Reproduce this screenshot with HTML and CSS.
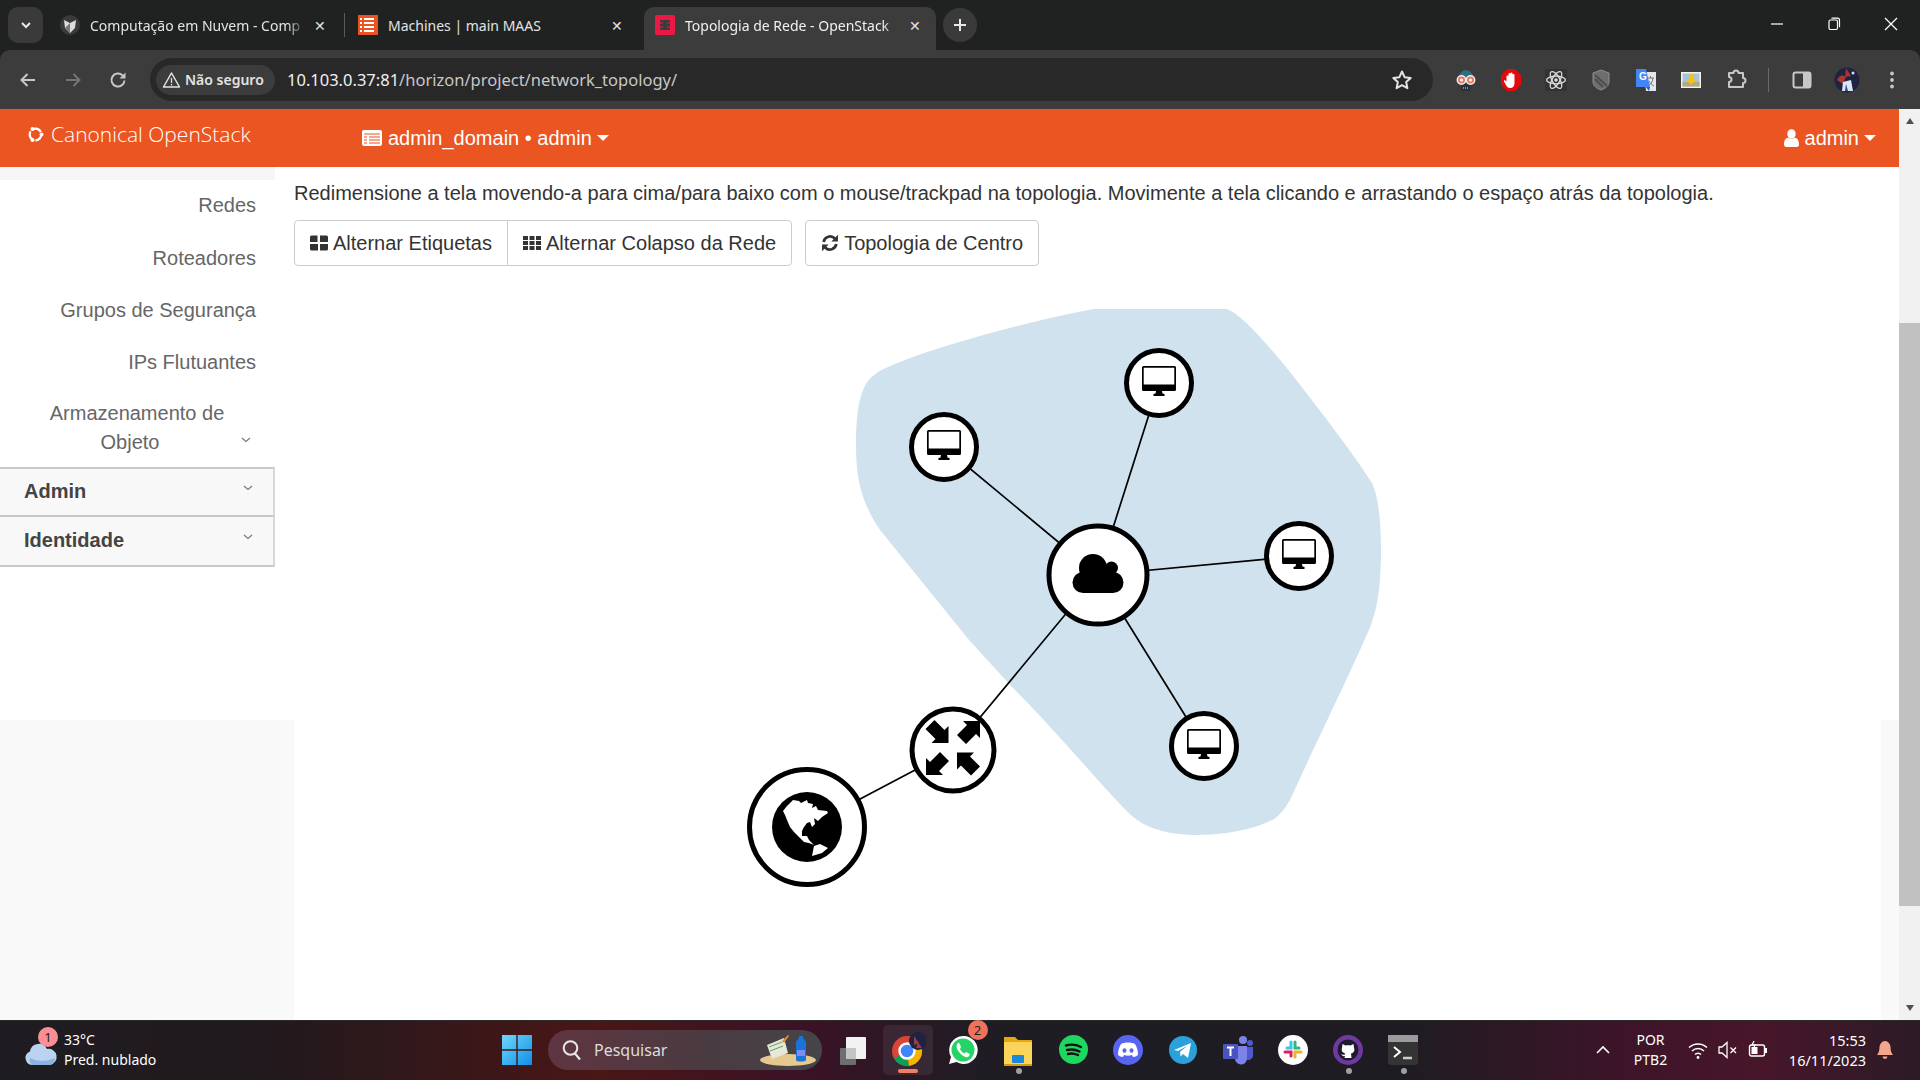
FILE: index.html
```html
<!DOCTYPE html>
<html lang="pt-BR">
<head>
<meta charset="utf-8">
<title>Topologia de Rede - OpenStack</title>
<link rel="stylesheet" href="styles.css">
</head>
<body>
<header class="tabstrip">
  <div class="tab-menu"><svg width="12" height="8" viewBox="0 0 12 8"><path d="M2 2l4 4 4-4" fill="none" stroke="#e8e8e8" stroke-width="2"/></svg></div>
  <div class="tab tab-first">
    <svg class="favicon" viewBox="0 0 20 20"><circle cx="10" cy="10" r="10" fill="#3a3a3a"/><path d="M4 5l6 3 6-3-1 8-5 5-5-5z" fill="#ddd"/><path d="M10 8v10l-5-5z" fill="#777"/></svg>
    <span class="tab-title">Computação em Nuvem - Comp</span>
    <span class="tab-close">✕</span>
  </div>
  <div class="tab-sep"></div>
  <div class="tab tab-second">
    <svg class="favicon" viewBox="0 0 20 20"><rect width="20" height="20" fill="#e95420"/><path d="M6 4h10M6 8h10M6 12h10M6 16h10" stroke="#fff" stroke-width="2"/><path d="M2 4h2M2 8h2M2 12h2M2 16h2" stroke="#fff" stroke-width="2"/></svg>
    <span class="tab-title">Machines | main MAAS</span>
    <span class="tab-close">✕</span>
  </div>
  <div class="tab tab-active">
    <svg class="favicon" viewBox="0 0 20 20"><rect width="20" height="20" rx="2" fill="#ed1944"/><rect x="5" y="5" width="10" height="10" fill="#3c3c3c"/><path d="M2 8h6M2 12h6M12 8h6M12 12h6" stroke="#ed1944" stroke-width="1"/></svg>
    <span class="tab-title">Topologia de Rede - OpenStack</span>
    <span class="tab-close">✕</span>
  </div>
  <div class="tab-new"><svg width="14" height="14" viewBox="0 0 14 14"><path d="M7 1v12M1 7h12" stroke="#e8e8e8" stroke-width="2"/></svg></div>
  <div class="win-controls">
    <svg class="win-btn" viewBox="0 0 14 14"><path d="M1 7h12" stroke="#fff" stroke-width="1.2"/></svg>
    <svg class="win-btn" viewBox="0 0 14 14"><rect x="2" y="3" width="8.5" height="9.5" rx="1.5" fill="none" stroke="#fff" stroke-width="1.2"/><path d="M4.5 1.2h6a2 2 0 0 1 2 2v7" fill="none" stroke="#fff" stroke-width="1.2"/></svg>
    <svg class="win-btn" viewBox="0 0 14 14"><path d="M1 1l12 12M13 1L1 13" stroke="#fff" stroke-width="1.2"/></svg>
  </div>
</header>

<div class="toolbar">
  <div class="nav-cell"><svg width="20" height="20" viewBox="0 0 20 20"><path d="M17 10H4M9.5 4L3.5 10l6 6" fill="none" stroke="#c7c7c7" stroke-width="2"/></svg></div>
  <div class="nav-cell"><svg width="20" height="20" viewBox="0 0 20 20"><path d="M3 10h13M10.500 4l6 6-6 6" fill="none" stroke="#757575" stroke-width="2"/></svg></div>
  <div class="nav-cell"><svg width="20" height="20" viewBox="0 0 20 20"><path d="M16.500 10.500a6.500 6.500 0 1 1-1.900-5.100L16.500 7" fill="none" stroke="#c7c7c7" stroke-width="2"/><path d="M17.500 2.500v6h-6z" fill="#c7c7c7"/></svg></div>
  <div class="omnibox">
    <div class="chip">
      <svg width="19" height="18" viewBox="0 0 19 18"><path d="M9.500 2L1.500 16h16z" fill="none" stroke="#e3e3e3" stroke-width="1.500" stroke-linejoin="round"/><path d="M9.500 7v5M9.500 13v1.500" stroke="#e3e3e3" stroke-width="1.300"/></svg>
      <span>Não seguro</span>
    </div>
    <div class="url"><span class="url-host">10.103.0.37:81</span>/horizon/project/network_topology/</div>
    <svg class="star" width="22" height="22" viewBox="0 0 22 22"><path d="M11 2.500l2.600 5.700 6.100.7-4.500 4.200 1.200 6.100L11 16.200l-5.400 3 1.200-6.100-4.500-4.200 6.100-.7z" fill="none" stroke="#e3e3e3" stroke-width="2" stroke-linejoin="round"/></svg>
  </div>
  <div class="ext-cell"><svg width="22" height="24" viewBox="0 0 22 24"><path d="M3 12a8 10 0 0 1 16 0z" fill="#2e6e80"/><rect x="6" y="14" width="10" height="9" rx="2" fill="#26343a"/><path d="M8 20h6" stroke="#9ab" stroke-width="1.500" stroke-dasharray="1 1"/><circle cx="6.500" cy="12" r="4.200" fill="#e7795f" stroke="#eee" stroke-width="1.500"/><circle cx="15.500" cy="12" r="4.200" fill="#e7795f" stroke="#eee" stroke-width="1.500"/><circle cx="6.500" cy="12" r="1.500" fill="#fff"/><circle cx="15.500" cy="12" r="1.500" fill="#fff"/></svg></div>
  <div class="ext-cell"><svg width="22" height="24" viewBox="0 0 22 24"><path d="M7 1h8l6 6v10l-6 6H7l-6-6V7z" fill="#e20b0b"/><path d="M6.500 14V8.500a1 1 0 0 1 2 0V12V6a1 1 0 0 1 2 0v6V5.500a1 1 0 0 1 2 0V12V7a1 1 0 0 1 2 0v8c0 3-1.500 5-4.500 5-2 0-3-1-4-3l-2-3.500c-.5-1 1-2 2-.5z" fill="#fff"/></svg></div>
  <div class="ext-cell"><svg width="22" height="22" viewBox="0 0 22 22"><rect width="22" height="22" rx="2" fill="#333"/><g fill="none" stroke="#ddd" stroke-width="1.300"><ellipse cx="11" cy="11" rx="9.500" ry="3.800"/><ellipse cx="11" cy="11" rx="9.500" ry="3.800" transform="rotate(60 11 11)"/><ellipse cx="11" cy="11" rx="9.500" ry="3.800" transform="rotate(120 11 11)"/></g><circle cx="11" cy="11" r="1.800" fill="#ddd"/></svg></div>
  <div class="ext-cell"><svg width="18" height="22" viewBox="0 0 18 22"><path d="M9 1l8 3v9c0 4-4 6.500-8 8-4-1.500-8-4-8-8V4z" fill="#6e6e6e" stroke="#8d8d8d"/><path d="M3 6l12 11M3 10l8 8" stroke="#4e4e4e" stroke-width="2"/></svg></div>
  <div class="ext-cell"><svg width="22" height="24" viewBox="0 0 22 24"><path d="M9 4h12v19H11z" fill="#e3e6ea"/><path d="M1 1h10l4 18H1z" fill="#4285f4"/><path d="M11 19l3 4 1-4z" fill="#2a56c6"/><path d="M12 10h7M15.500 8v2M13 18c3-1.500 4.500-4 5-8M14 13c1 2 3 4 5 5" stroke="#777" stroke-width="1" fill="none"/><text class="tr-g" x="4" y="12">G</text></svg></div>
  <div class="ext-cell"><svg width="20" height="16" viewBox="0 0 20 16"><rect width="20" height="16" fill="#f2f2f2"/><rect x="1.500" y="1.500" width="17" height="13" fill="#a9c4d4"/><rect x="1.500" y="10" width="17" height="4.500" fill="#b9a67c"/><path d="M8 2h4v5h3l-5 6-5-6h3z" fill="#f2c21a"/></svg></div>
  <div class="ext-cell"><svg width="22" height="22" viewBox="0 0 22 22"><path d="M3 5h4.500a2.500 2.500 0 0 1 5 0H17v5a2.500 2.500 0 0 1 0 5v4H3v-5a2.500 2.500 0 0 0 0-5z" transform="translate(1 -1)" fill="none" stroke="#c7c7c7" stroke-width="2" stroke-linejoin="round"/></svg></div>
  <div class="tb-sep"></div>
  <div class="ext-cell"><svg width="20" height="20" viewBox="0 0 20 20"><rect x="1.500" y="2.500" width="17" height="15" rx="2" fill="none" stroke="#c7c7c7" stroke-width="2"/><rect x="11" y="2.500" width="7.500" height="15" fill="#c7c7c7"/></svg></div>
  <div class="ext-cell"><svg width="26" height="28" viewBox="0 0 26 28"><circle cx="13" cy="14" r="12.500" fill="#1d2340"/><path d="M3 14c3-6 6-5 9-3l-3 7z" fill="#a8392c"/><path d="M12 2l5 8-6 1z" fill="#b03030"/><path d="M9 16l8-2 2 11H8z" fill="#dde4f2"/><path d="M12 18l2 7h-3z" fill="#2b4aa0"/><circle cx="19" cy="7" r="1.500" fill="#ddd"/></svg></div>
  <div class="ext-cell"><svg width="6" height="20" viewBox="0 0 6 20"><circle cx="3" cy="3.500" r="1.900" fill="#c7c7c7"/><circle cx="3" cy="10" r="1.900" fill="#c7c7c7"/><circle cx="3" cy="16.500" r="1.900" fill="#c7c7c7"/></svg></div>
</div>

<div class="viewport">
  <div class="page">
    <nav class="topbar">
      <div class="brand">
        <svg width="17" height="17" viewBox="0 0 17 17"><circle cx="8.500" cy="8.500" r="5.800" fill="none" stroke="#fff" stroke-width="2.200" stroke-dasharray="9 3"/><circle cx="14.500" cy="8.500" r="2" fill="#fff"/><circle cx="5.500" cy="3" r="2" fill="#fff"/><circle cx="5.500" cy="14" r="2" fill="#fff"/></svg>
        <span>Canonical OpenStack</span>
      </div>
      <div class="project">
        <svg width="20" height="16" viewBox="0 0 20 16"><rect width="20" height="16" rx="2" fill="#fff"/><path d="M2 4h16" stroke="#e95420" stroke-width="1"/><path d="M2 7h3M2 10h3M2 13h3M7 7h11M7 10h11M7 13h11" stroke="#e95420" stroke-width="1.200"/></svg>
        <span>admin_domain • admin</span><i class="caret"></i>
      </div>
      <div class="user">
        <svg width="15" height="18" viewBox="0 0 15 18"><ellipse cx="7.500" cy="5" rx="4.200" ry="4.800" fill="#fff"/><path d="M0 15.500C0 11 2 9 4 8.800c2 1.500 5 1.500 7 0 2 .2 4 2.200 4 6.700C15 17 14 18 13 18H2c-1 0-2-1-2-2.500z" fill="#fff"/></svg>
        <span>admin</span><i class="caret"></i>
      </div>
    </nav>
    <div class="page-body">
      <aside class="side-col">
        <div class="side">
          <div class="side-strip"></div>
          <a class="side-item side-item-first">Redes</a>
          <a class="side-item">Roteadores</a>
          <a class="side-item">Grupos de Segurança</a>
          <a class="side-item">IPs Flutuantes</a>
          <a class="side-item side-item-multi">
            <span class="multi-text">Armazenamento de Objeto<i class="multi-gap"></i></span>
            <svg class="chev chev-abs" width="10" height="6" viewBox="0 0 10 6"><path d="M1 1l4 3.500L9 1" fill="none" stroke="#777" stroke-width="1.100"/></svg>
          </a>
          <div class="side-head side-head-first"><b>Admin</b><svg class="chev" width="10" height="6" viewBox="0 0 10 6"><path d="M1 1l4 3.500L9 1" fill="none" stroke="#777" stroke-width="1.100"/></svg></div>
          <div class="side-head"><b>Identidade</b><svg class="chev" width="10" height="6" viewBox="0 0 10 6"><path d="M1 1l4 3.500L9 1" fill="none" stroke="#777" stroke-width="1.100"/></svg></div>
        </div>
        <div class="side-foot"></div>
      </aside>
      <main class="main">
        <p class="hint">Redimensione a tela movendo-a para cima/para baixo com o mouse/trackpad na topologia. Movimente a tela clicando e arrastando o espaço atrás da topologia.</p>
        <div class="btn-row">
          <div class="btn-group">
            <button class="btn"><svg width="18" height="16" viewBox="0 0 18 16"><path d="M0 2a1.500 1.500 0 0 1 1.500-1.500h6V7H0zM10 .5h6.500A1.500 1.500 0 0 1 18 2v5h-8zM0 9h8v6.500H1.500A1.500 1.500 0 0 1 0 14zM10 9h8v5a1.500 1.500 0 0 1-1.500 1.500H10z" fill="#333"/></svg>Alternar Etiquetas</button>
            <button class="btn"><svg width="18" height="16" viewBox="0 0 18 16"><path d="M0 1h5v4H0zM6.500 1h5v4h-5zM13 1h5v4h-5zM0 6h5v4H0zM6.500 6h5v4h-5zM13 6h5v4h-5zM0 11h5v4H0zM6.500 11h5v4h-5zM13 11h5v4h-5z" fill="#333"/></svg>Alternar Colapso da Rede</button>
          </div>
          <button class="btn"><svg width="18" height="18" viewBox="0 0 16 17"><path d="M2 7.500A6.200 6.200 0 0 1 12.600 4.300" fill="none" stroke="#333" stroke-width="2.600"/><path d="M15.500 .8v6.200H9.300z" fill="#333"/><path d="M14 9.500A6.200 6.200 0 0 1 3.400 12.700" fill="none" stroke="#333" stroke-width="2.600"/><path d="M.5 16.200V10h6.200z" fill="#333"/></svg>Topologia de Centro</button>
        </div>
        <svg class="topology" viewBox="294 280 1587 740" width="1587" height="740">
          <defs>
            <g id="monitor">
              <path fill-rule="evenodd" d="M-15.500 -17h31a1.500 1.500 0 0 1 1.500 1.500v22a1.500 1.500 0 0 1-1.500 1.500h-31a1.500 1.500 0 0 1-1.500-1.500v-22A1.500 1.500 0 0 1-15.500 -17zM-15.300 -15.300v16.800h30.600V-15.300z" fill="#000"/>
              <path d="M-3 8h6l.5 2.500 2 .5v2h-11v-2l2-.5z" fill="#000"/>
            </g>
            <polygon id="arrow" points="0,0 0,-17 -4,-13 -14,-23 -23,-14 -13,-4 -17,0" fill="#000"/>
          </defs>
          <path d="M1094 309H1226C1240 312 1268 345 1290 372C1320 410 1358 460 1372 483C1380 500 1381 530 1381 555C1380 590 1378 605 1371 625C1352 670 1315 745 1290 800C1284 810 1280 815 1274 819C1255 830 1222 835 1198 835C1172 835 1148 830 1132 816C1112 798 1060 735 1012 687L969 640L880 530C862 503 856 480 856 447C856 410 860 385 874 375C900 355 1040 318 1094 309Z" fill="#d1e2ef"/>
          <g stroke="#000" stroke-width="1.700" fill="none">
            <path d="M1098 575L1159 383M1098 575L944 447M1098 575L1299 556M1098 575L1204 746M1098 575L953 750M953 750L807 827"/>
          </g>
          <g fill="#fff" stroke="#000" stroke-width="5">
            <circle cx="1159" cy="383" r="32.500"/>
            <circle cx="944" cy="447" r="32.500"/>
            <circle cx="1299" cy="556" r="32.500"/>
            <circle cx="1204" cy="746" r="32.500"/>
            <circle cx="1098" cy="575" r="49"/>
            <circle cx="953" cy="750" r="41"/>
            <circle cx="807" cy="827" r="57.500"/>
          </g>
          <use href="#monitor" x="1159" y="383"/>
          <use href="#monitor" x="944" y="447"/>
          <use href="#monitor" x="1299" y="556"/>
          <use href="#monitor" x="1204" y="746"/>
          <g transform="translate(1098 575)" fill="#000">
            <circle cx="-5" cy="-7" r="14"/><circle cx="13.500" cy="-7" r="6.500"/><circle cx="-15" cy="7.500" r="10.500"/><circle cx="15" cy="7.500" r="10.500"/><rect x="-15" y="-6" width="30" height="24"/>
          </g>
          <g transform="translate(953 750)">
            <use href="#arrow" transform="translate(-4.500 -7)"/>
            <use href="#arrow" transform="translate(27 -29) rotate(-90)"/>
            <use href="#arrow" transform="translate(-27 25) rotate(90)"/>
            <use href="#arrow" transform="translate(4 2.500) rotate(180)"/>
          </g>
          <g transform="translate(807 827)">
            <circle r="35" fill="#000"/>
            <path fill="#fff" d="M-24-16L-20-21-14-27-8-26-6-24 0-27 1-24 6-23 5-19 9-21 11-17 20-16 21-14 15-10 11-6 7-9 8-3 5 0 3-5 0-4-3 0-5 4-5 9 0 9 2 13 7 18 2 16-3 15-7 11-13 5-17 0-20-7-22-12Z"/>
            <path fill="#fff" d="M5 29L7 19 13 17 21 21 15 26Z"/>
          </g>
        </svg>
      </main>
      <div class="gutter"><div class="gutter-foot"></div></div>
    </div>
  </div>
  <div class="scrollbar">
    <svg class="sb-arrow" width="10" height="8" viewBox="0 0 10 8"><path d="M5 1l4 6H1z" fill="#505050"/></svg>
    <div class="sb-track"><div class="sb-thumb"></div></div>
    <svg class="sb-arrow" width="10" height="8" viewBox="0 0 10 8"><path d="M5 7L1 1h8z" fill="#505050"/></svg>
  </div>
</div>

<footer class="taskbar">
  <div class="tb-weather">
    <svg class="weather-icon" width="34" height="24" viewBox="0 0 34 24"><path d="M8 24a7 7 0 0 1-2-13.500A9 9 0 0 1 23 8a7.500 7.500 0 0 1 3 16z" fill="#b9d3f0"/><path d="M6 17c8 4 16 4 25 0a7 7 0 0 1-5 7H8a7 7 0 0 1-2-7z" fill="#8eb1e0"/></svg>
    <span class="badge badge-weather">1</span>
    <div class="weather-text"><span>33°C</span><span>Pred. nublado</span></div>
  </div>
  <svg class="winlogo" width="30" height="30" viewBox="0 0 30 30"><defs><linearGradient id="wl" x1="0" y1="0" x2="1" y2="1"><stop offset="0" stop-color="#6fd8fb"/><stop offset="1" stop-color="#0f8fe6"/></linearGradient></defs><path d="M0 0h14.300v14.300H0zM15.700 0H30v14.300H15.700zM0 15.700h14.300V30H0zM15.700 15.700H30V30H15.700z" fill="url(#wl)"/></svg>
  <div class="search">
    <svg width="20" height="22" viewBox="0 0 20 22"><circle cx="8.500" cy="9" r="6.800" fill="none" stroke="#e8e8e8" stroke-width="2"/><path d="M13 14.500l5 6" stroke="#e8e8e8" stroke-width="2.200"/></svg>
    <span>Pesquisar</span>
    <svg class="search-art" width="60" height="34" viewBox="0 0 60 34"><ellipse cx="30" cy="27" rx="28" ry="6" fill="#e6c88e"/><path d="M9 12l17-7 4 15-16 6z" fill="#e4e8d8"/><path d="M11 14l13-5M12 18l13-5" stroke="#6d9a6a" stroke-width="1"/><path d="M24 8l6-6 1 1-5 7z" fill="#e88a3a"/><path d="M38 10c0-3 3-3 3-7h4c0 4 3 4 3 7v17c0 2-10 2-10 0z" fill="#1a73d9"/><rect x="39" y="17" width="8" height="6" fill="#7e8bf0"/></svg>
  </div>
  <div class="apps">
    <div class="app"><svg width="32" height="32" viewBox="0 0 32 32"><rect x="3" y="14" width="16" height="17" rx="1" fill="#6e6e6e"/><rect x="9" y="3" width="20" height="22" rx="1" fill="#f2f2f2"/><rect x="9" y="14" width="10" height="11" fill="#c4c4c4"/></svg></div>
    <div class="app app-active">
      <svg width="36" height="36" viewBox="0 0 36 36"><circle cx="17" cy="19" r="15" fill="#db4437"/><path d="M17 19L4 26.500A15 15 0 0 0 19 34z" fill="#0f9d58"/><path d="M17 19l2 15A15 15 0 0 0 30 11.500z" fill="#f4b400"/><circle cx="17" cy="19" r="7.500" fill="#4285f4" stroke="#fff" stroke-width="2.500"/><circle cx="28" cy="9" r="9" fill="#1d2340"/><path d="M24 4l5 7-5 2zM28 10l4 6h-6z" fill="#9a3a4a"/></svg>
      <i class="app-bar"></i>
    </div>
    <div class="app">
      <svg width="32" height="32" viewBox="0 0 32 32"><path d="M16 2a14 14 0 0 0-12 21L2 30l7.500-2A14 14 0 1 0 16 2z" fill="#fff"/><circle cx="16" cy="16" r="11.500" fill="#25d366"/><path d="M11 9c-2 2-2 5 1 9s7 6 9 5 2-3 1-3.500l-3-1.500-1.500 1.500c-2-1-3.500-2.500-4.500-4.500L14 13l-1.500-3.500c-.5-1-1-1-1.500-.5z" fill="#fff"/></svg>
      <span class="badge badge-wa">2</span>
    </div>
    <div class="app">
      <svg width="30" height="32" viewBox="0 0 30 32"><path d="M1 3h11l3 3h14v26H1z" fill="#e8a70f"/><rect x="1" y="8" width="28" height="24" fill="#fbd45a"/><rect x="9" y="21" width="12" height="8" rx="1" fill="#1d87d8"/><rect x="1" y="30" width="28" height="2" fill="#d99a0c"/></svg>
      <i class="app-dot"></i>
    </div>
    <div class="app"><svg width="29" height="29" viewBox="0 0 29 29"><circle cx="14.500" cy="14.500" r="14.500" fill="#1ed760"/><path d="M7 10.500c5-1.500 10-1 15 1.500M8 15c4-1 8-.8 12.500 1.500M9 19c3-.8 6.500-.5 10 1" fill="none" stroke="#111" stroke-width="2.400" stroke-linecap="round"/></svg></div>
    <div class="app"><svg width="30" height="30" viewBox="0 0 30 30"><circle cx="15" cy="15" r="15" fill="#5865f2"/><path d="M8 9c4-2 10-2 14 0 2 3 3 7 3 11-1.500 1-3 2-5 2l-1-2c-3 1-5 1-8 0l-1 2c-2 0-3.500-1-5-2 0-4 1-8 3-11z" fill="#fff"/><ellipse cx="11.500" cy="15.500" rx="2" ry="2.300" fill="#5865f2"/><ellipse cx="18.500" cy="15.500" rx="2" ry="2.300" fill="#5865f2"/></svg></div>
    <div class="app"><svg width="28" height="28" viewBox="0 0 28 28"><circle cx="14" cy="14" r="14" fill="#2aa1da"/><path d="M5 14L22 7l-3 15-5-4-2.500 2.500-.5-4.500 7-6-9 5z" fill="#fff"/></svg></div>
    <div class="app"><svg width="30" height="30" viewBox="0 0 30 30"><circle cx="20" cy="5" r="4" fill="#7b83eb"/><circle cx="27" cy="8" r="3" fill="#5059c9"/><path d="M22 12h8v9a5 5 0 0 1-8 3z" fill="#5059c9"/><path d="M9 11h15v12a6 6 0 0 1-12 1z" fill="#7b83eb"/><rect y="9" width="15" height="15" rx="1" fill="#4b53bc"/><path d="M4 12.500h7M7.500 12.500V21" stroke="#fff" stroke-width="2"/></svg></div>
    <div class="app"><svg width="30" height="30" viewBox="0 0 30 30"><circle cx="15" cy="15" r="15" fill="#fff"/><path d="M13 7v6H9" fill="none" stroke="#36c5f0" stroke-width="3" stroke-linecap="round"/><path d="M17 7v6h4" fill="none" stroke="#2eb67d" stroke-width="3" stroke-linecap="round"/><path d="M7 17h6v4" fill="none" stroke="#e01e5a" stroke-width="3" stroke-linecap="round"/><path d="M23 17h-6v5" fill="none" stroke="#ecb22e" stroke-width="3" stroke-linecap="round"/></svg></div>
    <div class="app">
      <svg width="30" height="30" viewBox="0 0 30 30"><circle cx="15" cy="15" r="15" fill="#6e3a9e"/><circle cx="15" cy="15" r="10.500" fill="#1f1a2e"/><path d="M9 13l.5-4 3 1.500c1.500-.5 3.500-.5 5 0l3-1.500.5 4c1 2 0 5-3 5.500l.5 4.500h-7l.5-2c-2 .5-3-.5-4-2 1 .5 2 1 4 .5l.2-1C10 18 8 16 9 13z" fill="#fff"/></svg>
      <i class="app-dot"></i>
    </div>
    <div class="app">
      <svg width="30" height="30" viewBox="0 0 30 30"><rect width="30" height="30" rx="3" fill="#343434"/><rect width="30" height="7" fill="#9b9b9b"/><path d="M6 12l6 5-6 5" fill="none" stroke="#fff" stroke-width="2"/><path d="M15 23h9" stroke="#ccc" stroke-width="2.500"/></svg>
      <i class="app-dot"></i>
    </div>
  </div>
  <div class="tray">
    <div class="tray-cell"><svg width="14" height="9" viewBox="0 0 14 9"><path d="M1 8l6-6 6 6" fill="none" stroke="#fff" stroke-width="1.600"/></svg></div>
    <div class="tray-lang"><span>POR</span><span>PTB2</span></div>
    <div class="tray-cell"><svg width="20" height="20" viewBox="0 0 20 20"><path d="M1 7.500a13 13 0 0 1 18 0M4 11a8.500 8.500 0 0 1 12 0M7 14.500a4 4 0 0 1 6 0" fill="none" stroke="#fff" stroke-width="1.500"/><circle cx="10" cy="17.500" r="1.400" fill="#fff"/></svg></div>
    <div class="tray-cell"><svg width="20" height="20" viewBox="0 0 20 20"><path d="M1 7h3l5-4.500v15L4 13H1z" fill="none" stroke="#fff" stroke-width="1.300"/><path d="M12.500 7.500l5.500 5.500M18 7.500L12.500 13" stroke="#fff" stroke-width="1.300"/></svg></div>
    <div class="tray-cell"><svg width="20" height="20" viewBox="0 0 20 20"><rect x="1.500" y="5" width="15" height="11" rx="2" fill="none" stroke="#fff" stroke-width="1.400"/><rect x="3.500" y="7" width="6" height="7" fill="#fff"/><rect x="17" y="8" width="2" height="5" fill="#fff"/><path d="M6 1l-2 4h3l-2 5" fill="none" stroke="#fff" stroke-width="1.200"/></svg></div>
    <div class="tray-clock"><span>15:53</span><span>16/11/2023</span></div>
    <div class="tray-bell"><svg width="18" height="20" viewBox="0 0 18 20"><path d="M9 1a6 6 0 0 0-5.500 6c0 4-1 6-2.500 8h16c-1.500-2-2.500-4-2.500-8A6 6 0 0 0 9 1z" fill="#f4a58a"/><path d="M6.500 16.500a2.500 2.500 0 0 0 5 0z" fill="#f4a58a"/></svg></div>
  </div>
</footer>
</body>
</html>
```

FILE: styles.css
```css
* { box-sizing: border-box; }
html, body { margin: 0; height: 100%; }
body {
  width: 1920px; height: 1080px; overflow: hidden;
  display: flex; flex-direction: column;
  font-family: "Liberation Sans", Arial, sans-serif;
  background: #202221; color: #333;
}

/* Browser tab strip */
.tabstrip {
  height: 50px; flex: none; display: flex; align-items: flex-end;
  background: #202221; color: #e3e3e3;
  font-family: "Noto Sans", sans-serif; font-size: 14px;
}
.tab-menu {
  width: 35px; height: 36px; margin: 0 0 7px 8px; border-radius: 10px;
  background: #3a3a3a; display: flex; align-items: center; justify-content: center; flex: none;
}
.tab {
  height: 43px; display: flex; align-items: center; flex: none; position: relative;
  padding-bottom: 7px;
}
.tab-first { width: 285px; margin-left: 9px; padding-left: 8px; padding-right: 8px; }
.tab-second { width: 289px; padding-left: 13px; padding-right: 8px; }
.tab-active { width: 292px; padding-left: 11px; padding-right: 12px; margin-left: 10px; background: #3c3c3c; border-radius: 10px 10px 0 0; color: #f0f0f0; }
.tab-sep { width: 1px; height: 24px; background: #5a5a5a; margin: 0 0 13px 7px; flex: none; }
.favicon { width: 20px; height: 20px; flex: none; margin-right: 10px; }
.tab-title {
  flex: 1; min-width: 0; white-space: nowrap; overflow: hidden;
  -webkit-mask-image: linear-gradient(to right, #000 92%, transparent);
  mask-image: linear-gradient(to right, #000 92%, transparent);
}
.tab-second .tab-title { -webkit-mask-image: none; mask-image: none; }
.tab-close { width: 18px; text-align: center; font-size: 14px; flex: none; margin-left: 6px; color: #e3e3e3; }
.tab-new {
  width: 34px; height: 34px; border-radius: 50%; background: #3a3a3a; flex: none;
  margin: 0 0 8px 7px; display: flex; align-items: center; justify-content: center;
}
.win-controls { margin-left: auto; display: flex; gap: 43px; align-self: flex-start; padding: 17px 22px 0 0; }
.win-btn { width: 14px; height: 14px; }

/* Browser toolbar */
.toolbar {
  height: 59px; flex: none; display: flex; align-items: center; padding-left: 5px;
  background: #3c3c3c; border-radius: 10px 10px 0 0; color: #e3e3e3;
  font-family: "Noto Sans", sans-serif;
}
.nav-cell { width: 45px; display: flex; justify-content: center; flex: none; }
.omnibox {
  width: 1283px; height: 43px; margin: 0 10px 0 10px; flex: none; border-radius: 22px; background: #282828;
  display: flex; align-items: center; padding: 0 20px 0 6px;
}
.chip {
  height: 30px; width: 119px; border-radius: 15px; background: #3c3c3c; flex: none;
  display: flex; align-items: center; gap: 4px; padding-left: 6px;
  font-size: 14px; font-weight: 600; white-space: nowrap;
}
.url { margin-left: 12px; font-size: 16.500px; color: #c7c7c7; flex: 1; white-space: nowrap; }
.url-host { color: #f0f0f0; }
.ext-cell { width: 45px; height: 30px; flex: none; display: flex; align-items: center; justify-content: center; }
.tb-sep { width: 1px; height: 24px; background: #6a6a6a; margin: 0 10px; flex: none; }
.tr-g { font-family: "Liberation Sans", sans-serif; font-size: 10px; font-weight: 700; fill: #fff; }

/* Viewport below the browser chrome */
.viewport { flex: 1; min-height: 0; display: flex; background: #fff; }
.page { flex: 1; min-width: 0; display: flex; flex-direction: column; }
.topbar {
  height: 58px; flex: none; background: #eb5522; color: #fff; display: flex; align-items: center;
  font-size: 20px;
}
.brand { width: 362px; display: flex; align-items: center; gap: 7px; padding: 0 0 8px 27px; font-family: "Open Sans", sans-serif; font-weight: 300; font-size: 21px; flex: none; white-space: nowrap; }
.project { display: flex; align-items: center; gap: 6px; flex: none; }
.user { margin-left: auto; display: flex; align-items: center; gap: 6px; padding-right: 23px; }
.caret { width: 0; height: 0; border-left: 6px solid transparent; border-right: 6px solid transparent; border-top: 6px solid #fff; margin-left: -1px; }

.page-body { flex: 1; min-height: 0; display: flex; }
.side-col { width: 294px; flex: none; display: flex; flex-direction: column; }
.side { width: 275px; height: 553px; flex: none; background: #fff; }
.side-strip { height: 13px; background: #f6f6f6; }
.side-item {
  display: block; height: 52px; padding: 12px 19px 0 0; text-align: right;
  font-size: 20px; line-height: 29px; color: #666;
}
.side-item-first { padding-top: 11px; }
.side-item-multi { height: 79px; padding: 11px 0 0 0; position: relative; text-align: center; }
.multi-text { display: block; width: 178px; margin-left: 48px; }
.multi-gap { display: inline-block; width: 14px; }
.chev-abs { position: absolute; left: 241px; top: 49px; }
.side-head {
  height: 50px; display: flex; align-items: center; justify-content: space-between;
  padding: 0 24px 2px 24px; background: #f8f8f8; font-size: 20px; color: #444;
  border-bottom: 2px solid #c8c8c8; border-right: 2px solid #d8d8d8;
}
.side-head-first { border-top: 2px solid #c8c8c8; }
.side-head .chev { margin: -6px -4px 0 0; }
.side-foot { flex: 1; background: #f9f9f9; }

.main { flex: 1; min-width: 0; display: flex; flex-direction: column; background: #fff; }
.hint { margin: 0; padding-top: 14px; font-size: 20px; line-height: 25px; color: #333; white-space: nowrap; }
.btn-row { display: flex; gap: 13px; margin-top: 14px; }
.btn-group { display: flex; }
.btn {
  height: 46px; display: flex; align-items: center; gap: 5px; padding: 0 15px;
  border: 1px solid #ccc; background: #fff; color: #333; border-radius: 4px;
  font: 20px "Liberation Sans", Arial, sans-serif; white-space: nowrap;
}
.btn-group .btn:first-child { border-radius: 4px 0 0 4px; }
.btn-group .btn:last-child { border-radius: 0 4px 4px 0; margin-left: -1px; }
.topology { display: block; margin-top: 14px; flex: none; }

.gutter { width: 18px; flex: none; display: flex; flex-direction: column; justify-content: flex-end; }
.gutter-foot { height: 300px; background: #f9f9f9; }

.scrollbar { width: 21px; flex: none; background: #f1f1f1; display: flex; flex-direction: column; align-items: center; justify-content: space-between; padding: 8px 0; }
.sb-track { flex: 1; width: 100%; display: flex; flex-direction: column; padding-top: 198px; padding-bottom: 98px; }
.sb-thumb { flex: 1; background: #c1c1c1; }

/* Windows taskbar */
.taskbar {
  height: 60px; flex: none; display: flex; align-items: center; position: relative; color: #fff;
  border-top: 1px solid #2a2a2c; padding-bottom: 2px;
  font-family: "Noto Sans", sans-serif;
  background: linear-gradient(90deg, #1f1d22 0, #21191d 270px, #4a1616 600px, #3b1226 800px, #1f1c24 980px, #1e1c22 1400px, #3d1429 1620px, #48162a 1760px, #2b1b26 1920px);
}
.tb-weather { width: 502px; flex: none; display: flex; align-items: center; position: relative; padding-left: 24px; }
.weather-icon { flex: none; margin-top: 6px; }
.weather-text { display: flex; flex-direction: column; margin-left: 6px; font-size: 14px; line-height: 20px; }
.badge {
  position: absolute; width: 20px; height: 20px; border-radius: 50%;
  display: flex; align-items: center; justify-content: center; font-size: 13px; color: #222;
}
.badge-weather { left: 38px; top: -3px; background: #fb8f94; }
.badge-wa { right: 3px; top: -5px; background: #f0725c; }
.winlogo { flex: none; }
.search {
  width: 274px; height: 40px; margin-left: 16px; flex: none; border-radius: 20px;
  background: linear-gradient(90deg, #5f3540, #4a3b42 60%, #45454a);
  display: flex; align-items: center; padding-left: 14px; gap: 12px; font-size: 16px; color: #ddd; position: relative;
}
.search-art { position: absolute; right: 4px; top: 3px; }
.apps { display: flex; margin-left: 3.500px; flex: none; }
.app { width: 55px; height: 50px; display: flex; align-items: center; justify-content: center; position: relative; border-radius: 5px; }
.app-active { background: rgba(255, 255, 255, .07); width: 50px; margin: 0 2.500px; }
.app-bar { position: absolute; left: 15px; bottom: 2px; width: 20px; height: 4px; border-radius: 2px; background: #f07f66; }
.app-dot { position: absolute; left: 25px; bottom: 1px; width: 6px; height: 6px; border-radius: 50%; background: #a0a0a0; }
.tray { margin-left: auto; display: flex; align-items: center; padding-right: 16px; flex: none; }
.tray-cell { width: 30px; display: flex; justify-content: center; flex: none; }
.tray-lang { width: 65px; display: flex; flex-direction: column; align-items: center; font-size: 14px; line-height: 20px; }
.tray-clock { width: 93px; display: flex; flex-direction: column; align-items: flex-end; font-size: 14.500px; line-height: 20px; }
.tray-bell { width: 38px; display: flex; justify-content: center; }
```
